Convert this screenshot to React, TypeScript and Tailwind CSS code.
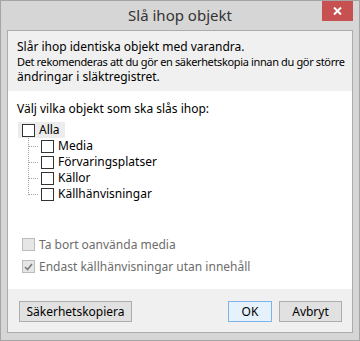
import React from "react";

const font = { fontFamily: '"Noto Sans", "Liberation Sans", sans-serif' };

function Box({ disabled, checked }: { disabled?: boolean; checked?: boolean }) {
  return (
    <span
      className={
        "flex h-[13px] w-[13px] shrink-0 items-center justify-center border " +
        (disabled ? "border-[#bcbcbc] bg-[#e6e6e6]" : "border-[#333333] bg-white")
      }
    >
      {checked && (
        <svg width="9" height="8" viewBox="0 0 9 8">
          <path d="M1 4 L3.5 6.5 L8 1" fill="none" stroke="#7a7a7a" strokeWidth="1.6" />
        </svg>
      )}
    </span>
  );
}

const children = ["Media", "Förvaringsplatser", "Källor", "Källhänvisningar"];

export default function App() {
  return (
    <div
      className="flex h-[341px] w-[360px] flex-col overflow-hidden border border-[#a5a5a5] bg-[#d6d6d6] text-[12px] text-black"
      style={font}
    >
      {/* title bar */}
      <div className="relative flex h-[29px] items-center justify-center">
        <span className="text-[15px] text-[#333333]">Slå ihop objekt</span>
        <div className="absolute right-[6px] top-0 flex h-[20px] w-[31px] items-center justify-center bg-[#c75050]">
          <svg width="9" height="8" viewBox="0 0 9 8">
            <path d="M1 0.5 L8 7.5 M8 0.5 L1 7.5" stroke="white" strokeWidth="2" />
          </svg>
        </div>
      </div>

      <div className="flex min-w-0 flex-1 px-[6px] pb-[7px]">
        <div className="flex min-w-0 flex-1 flex-col overflow-hidden border border-[#ababab] bg-[#f0f0f0]">
          <div className="h-[60px] whitespace-nowrap px-[9px] pt-[8px] leading-[15px]">
            <p>Slår ihop identiska objekt med varandra.</p>
            <p className="text-[11px] tracking-[-0.36px]">
              Det rekomenderas att du gör en säkerhetskopia innan du gör större
            </p>
            <p>ändringar i släktregistret.</p>
          </div>

          <div className="flex h-[198px] flex-col whitespace-nowrap bg-white px-[9px] pt-[10px]">
            <p className="leading-[15px]">Välj vilka objekt som ska slås ihop:</p>

            <div className="mt-[6px] pl-[1px]">
              <div className="flex h-[16px] w-fit items-center gap-[4px] bg-[#ececec] pl-[4px] pr-[5px]">
                <Box />
                <span>Alla</span>
              </div>
              <div className="relative pl-[23px]">
                <div className="absolute left-[10px] top-0 h-[57px] border-l border-dotted border-[#a0a0a0]" />
                {children.map((c) => (
                  <div key={c} className="relative flex h-[16px] items-center gap-[4px]">
                    <div className="absolute left-[-13px] top-[8px] w-[10px] border-t border-dotted border-[#a0a0a0]" />
                    <Box />
                    <span>{c}</span>
                  </div>
                ))}
              </div>
            </div>

            <div className="mt-[36px] flex flex-col gap-[9px] pl-[5px] text-[#6d6d6d]">
              <div className="flex h-[13px] items-center gap-[4px]">
                <Box disabled />
                <span>Ta bort oanvända media</span>
              </div>
              <div className="flex h-[13px] items-center gap-[4px]">
                <Box disabled checked />
                <span>Endast källhänvisningar utan innehåll</span>
              </div>
            </div>
          </div>

          <div className="flex flex-1 items-start pl-[11px] pr-[10px] pt-[12px]">
            <button className="h-[21px] w-[113px] border border-[#adadad] bg-[#e1e1e1]">
              Säkerhetskopiera
            </button>
            <div className="flex-1" />
            <button className="h-[21px] w-[44px] border border-[#7eb4ea] bg-[#e5f1fb]">OK</button>
            <button className="ml-[7px] h-[21px] w-[63px] border border-[#adadad] bg-[#e1e1e1]">
              Avbryt
            </button>
          </div>
        </div>
      </div>
    </div>
  );
}
